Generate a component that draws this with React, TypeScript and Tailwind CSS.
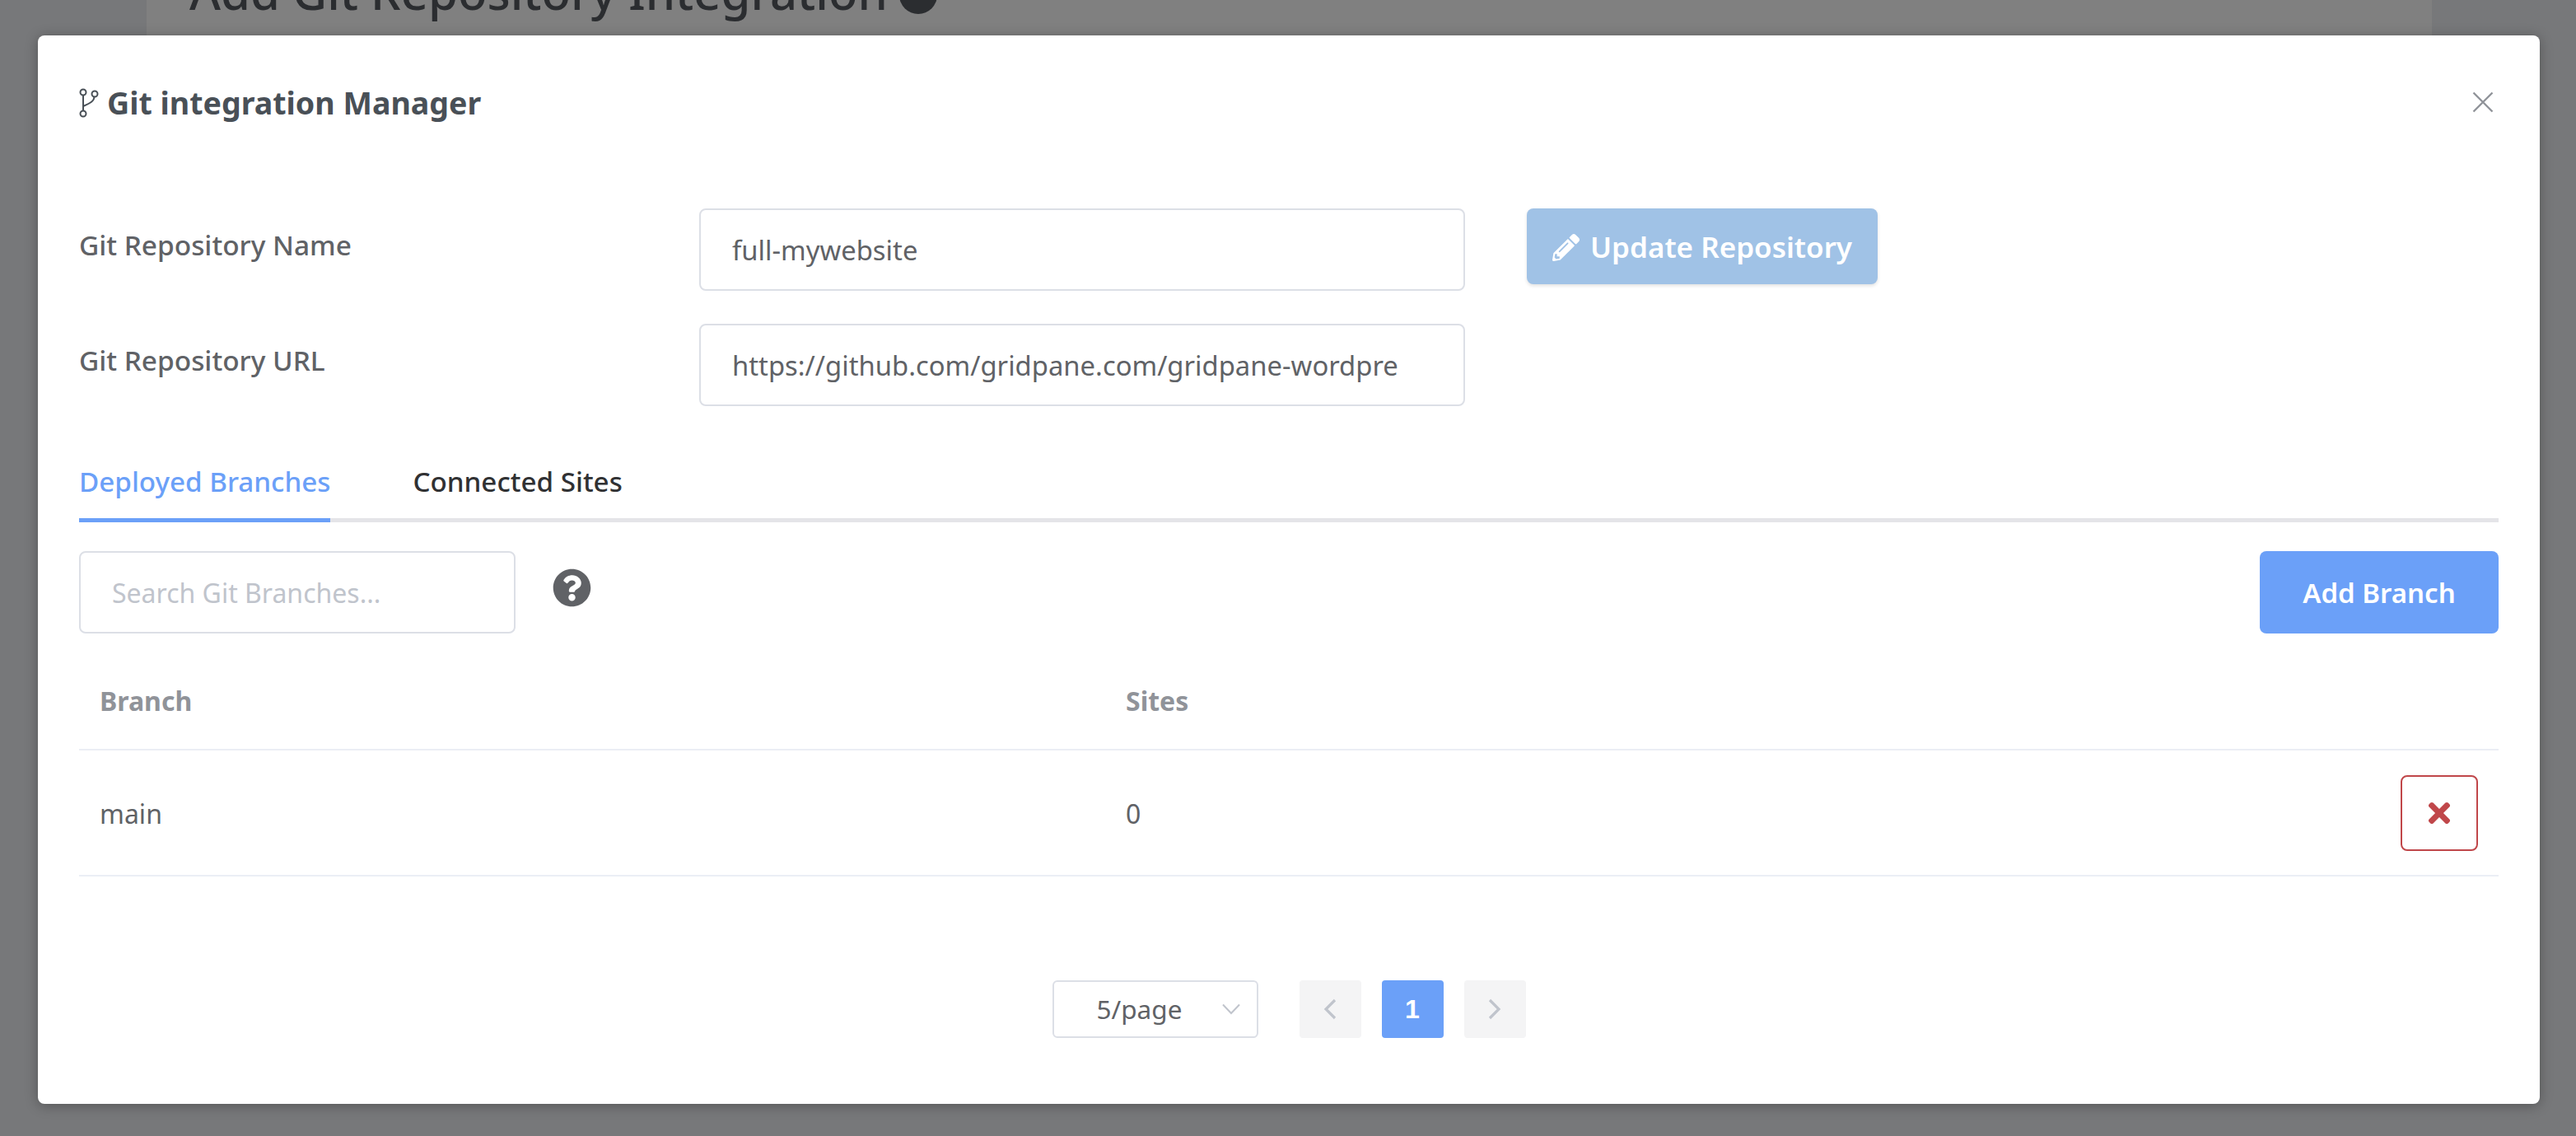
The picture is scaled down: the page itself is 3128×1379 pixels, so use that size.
import { FaPencilAlt, FaTimes, FaQuestionCircle } from "react-icons/fa";

const F = "font-['Noto_Sans','Open_Sans',sans-serif]";

export default function App() {
  return (
    <div className={`relative h-[1379px] w-[3128px] overflow-hidden bg-[#77787a] ${F}`}>
      <div className="ml-[178px] h-full w-[2775px] bg-[#808080] pl-[52px]">
        <div className="-mt-[50px] flex items-center gap-[14px] text-[58px] leading-[80px] font-medium text-[#2b2d30]">
          <span>Add Git Repository Integration</span>
          <span className="mt-[8px] h-[46px] w-[46px] rounded-full bg-[#2b2d30]" />
        </div>
      </div>

      <div className="absolute left-[46px] top-[43px] flex h-[1297px] w-[3038px] flex-col rounded-[8px] bg-white px-[50px] shadow-[0_2px_16px_rgba(0,0,0,0.3)]">
        <div className="flex h-[164px] items-center justify-between">
          <div className="flex items-center gap-[10px]">
            <svg width="24" height="36" viewBox="0 0 24 36" fill="none" stroke="#495057" strokeWidth="2">
              <circle cx="5" cy="5" r="3.5" />
              <circle cx="19" cy="7" r="3.5" />
              <circle cx="5" cy="31" r="3.5" />
              <path d="M5 8.5V27.5M18.5 10.5C18 16 14 18 5 22" />
            </svg>
            <h1 className="text-[37.6px] leading-[48px] font-bold text-[#495057]">Git integration Manager</h1>
          </div>
          <svg width="26" height="26" viewBox="0 0 26 26" stroke="#909399" strokeWidth="2.4" className="mb-[2px] mr-[6px]">
            <path d="M1.5 1.5L24.5 24.5M24.5 1.5L1.5 24.5" />
          </svg>
        </div>

        <div className="mt-[46px] flex flex-col gap-[40px]">
          <div className="flex items-start">
            <label className="w-[755px] shrink-0 pt-[22px] text-[33.4px] leading-[44px] font-medium text-[#606266]">Git Repository Name</label>
            <input readOnly defaultValue="full-mywebsite" className="-ml-[2px] h-[100px] w-[930px] rounded-[8px] border-2 border-[#dcdfe6] px-[38px] text-[32.8px] text-[#606266] outline-none" />
            <button className="ml-[75px] flex h-[92px] w-[426px] items-center justify-center gap-[13px] rounded-[8px] bg-[#a0c2e6] pt-[2px] text-[35px] font-semibold text-white shadow-[0_2px_4px_rgba(0,0,0,0.12)]">
              <FaPencilAlt size={33} />
              <span>Update Repository</span>
            </button>
          </div>
          <div className="flex items-start">
            <label className="w-[755px] shrink-0 pt-[22px] text-[33.4px] leading-[44px] font-medium text-[#606266]">Git Repository URL</label>
            <input readOnly defaultValue="https://github.com/gridpane.com/gridpane-wordpre" className="-ml-[2px] h-[100px] w-[930px] rounded-[8px] border-2 border-[#dcdfe6] px-[38px] text-[32.8px] text-[#606266] outline-none" />
          </div>
        </div>

        <div className="mt-[40px] flex h-[101px] gap-[100px] border-b-[5px] border-[#e4e4e8] text-[33.2px] font-medium">
          <div className="-mb-[5px] flex h-[101px] items-start border-b-[5px] border-[#6ba0f8] pt-[30px] leading-[44px] text-[#6ba0f8]">Deployed Branches</div>
          <div className="pt-[30px] leading-[44px] text-[#303133]">Connected Sites</div>
        </div>

        <div className="mt-[35px] flex items-start">
          <input placeholder="Search Git Branches..." className="h-[100px] w-[530px] rounded-[8px] border-2 border-[#dcdfe6] px-[38px] text-[32px] text-[#606266] outline-none placeholder:text-[#c0c4cc]" />
          <FaQuestionCircle size={47} className="ml-[45px] mt-[21px] text-[#606266]" />
          <button className="ml-auto h-[100px] w-[290px] rounded-[8px] bg-[#6ba0f8] pt-[2px] text-[33px] font-semibold text-white">Add Branch</button>
        </div>

        <div className="flex h-[142px] items-center border-b-2 border-[#ebeef5] pl-[25px] pt-[24px] text-[32px] font-bold text-[#909399]">
          <div className="w-[1246px]">Branch</div>
          <div>Sites</div>
        </div>
        <div className="flex h-[153px] items-center border-b-2 border-[#ebeef5] pl-[25px] text-[32px] text-[#606266]">
          <div className="w-[1246px] pt-[2px]">main</div>
          <div className="pt-[2px]">0</div>
          <button className="ml-auto mr-[25px] flex h-[92px] w-[94px] items-center justify-center rounded-[8px] border-2 border-[#c0474a] bg-white text-[#c0474a]">
            <FaTimes size={38} />
          </button>
        </div>

        <div className="mt-[126px] flex items-center justify-center">
          <div className="flex h-[70px] w-[250px] items-center rounded-[6px] border-2 border-[#dcdfe6] pl-[52px] pr-[20px] text-[31.5px] text-[#606266]">
            <span>5/page</span>
            <svg width="22" height="14" viewBox="0 0 22 14" fill="none" stroke="#c0c4cc" strokeWidth="2" className="ml-auto">
              <path d="M1 1.5L11 12L21 1.5" />
            </svg>
          </div>
          <div className="ml-[50px] flex h-[70px] w-[75px] items-center justify-center rounded-[4px] bg-[#f4f4f5]">
            <svg width="18" height="26" viewBox="0 0 18 26" fill="none" stroke="#c0c4cc" strokeWidth="3.2"><path d="M15 2L4 13L15 24" /></svg>
          </div>
          <div className="ml-[25px] flex h-[70px] w-[75px] items-center justify-center rounded-[4px] bg-[#6ba0f8] font-['Liberation_Sans',sans-serif] text-[32px] font-bold text-white">1</div>
          <div className="ml-[25px] flex h-[70px] w-[75px] items-center justify-center rounded-[4px] bg-[#f4f4f5]">
            <svg width="18" height="26" viewBox="0 0 18 26" fill="none" stroke="#c0c4cc" strokeWidth="3.2"><path d="M3 2L14 13L3 24" /></svg>
          </div>
        </div>
      </div>
    </div>
  );
}
